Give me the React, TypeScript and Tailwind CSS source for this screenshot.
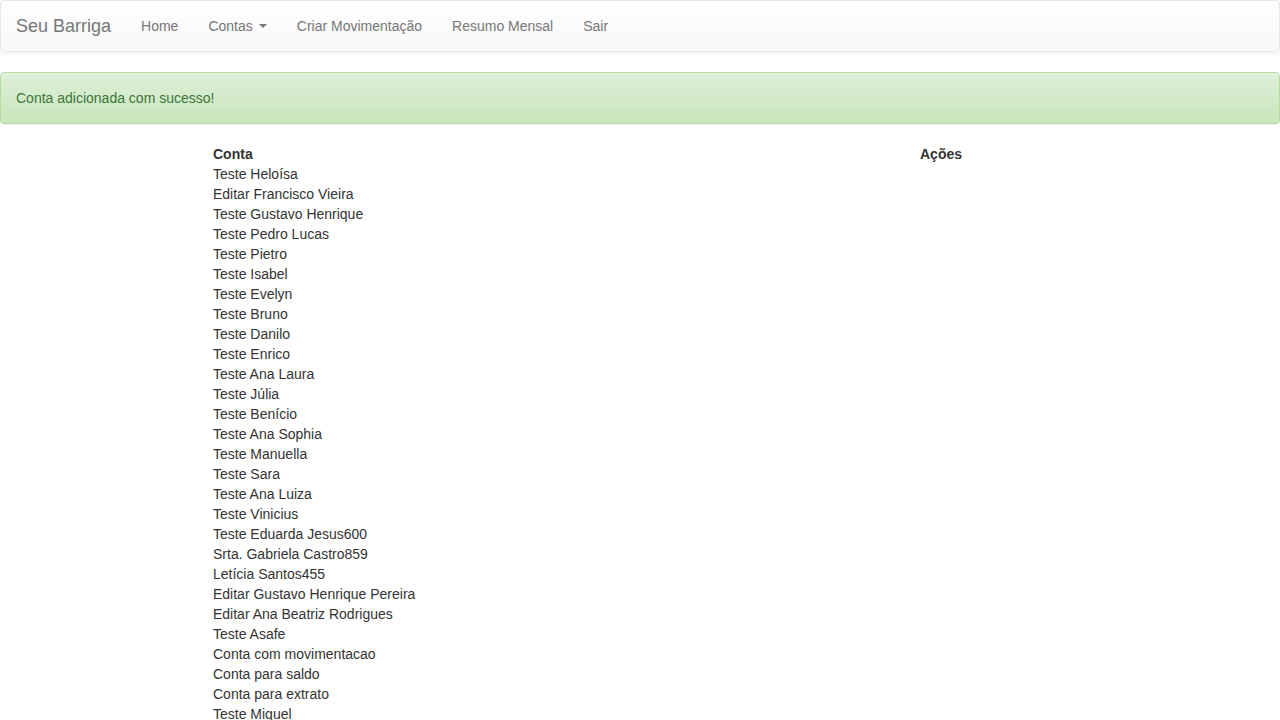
import React from "react";

const navLinks = ["Home", "Contas", "Criar Movimentação", "Resumo Mensal", "Sair"];

const contas: string[] = [
  "Teste Heloísa",
  "Editar Francisco Vieira",
  "Teste Gustavo Henrique",
  "Teste Pedro Lucas",
  "Teste Pietro",
  "Teste Isabel",
  "Teste Evelyn",
  "Teste Bruno",
  "Teste Danilo",
  "Teste Enrico",
  "Teste Ana Laura",
  "Teste Júlia",
  "Teste Benício",
  "Teste Ana Sophia",
  "Teste Manuella",
  "Teste Sara",
  "Teste Ana Luiza",
  "Teste Vinicius",
  "Teste Eduarda Jesus600",
  "Srta. Gabriela Castro859",
  "Letícia Santos455",
  "Editar Gustavo Henrique Pereira",
  "Editar Ana Beatriz Rodrigues",
  "Teste Asafe",
  "Conta com movimentacao",
  "Conta para saldo",
  "Conta para extrato",
  "Teste Miguel",
  "Teste Lorena",
  "Teste Rafael",
];

const App: React.FC = () => {
  return (
    <div className="min-h-screen bg-white text-[14px] leading-[20px] text-[#333]" style={{ fontFamily: '"Liberation Sans", Arial, sans-serif' }}>
      {/* Navbar */}
      <nav className="flex h-[52px] items-stretch rounded-[4px] border border-[#e7e7e7] bg-linear-to-b from-white to-[#f8f8f8] shadow-[inset_0_1px_0_rgba(255,255,255,0.15),0_1px_5px_rgba(0,0,0,0.075)]">
        <a className="flex items-center px-[15px] text-[18px] text-[#777]">Seu Barriga</a>
        <ul className="flex items-stretch">
          {navLinks.map((link) => (
            <li key={link} className="flex items-center px-[15px] text-[#777]">
              {link}
              {link === "Contas" && (
                <span className="ml-[6px] inline-block h-0 w-0 border-x-[4px] border-t-[4px] border-x-transparent border-t-[#777]" />
              )}
            </li>
          ))}
        </ul>
      </nav>

      {/* Alert */}
      <div className="mt-[20px] rounded-[4px] border border-[#b2dba1] bg-linear-to-b from-[#dff0d8] to-[#c8e5bc] p-[15px] text-[#3c763d] shadow-[inset_0_1px_0_rgba(255,255,255,0.25),0_1px_2px_rgba(0,0,0,0.05)]">
        Conta adicionada com sucesso!
      </div>

      {/* Table */}
      <table className="ml-[213px] mt-[20px] w-[854px] border-collapse">
        <thead>
          <tr>
            <th className="w-[707px] p-0 text-left font-bold">Conta</th>
            <th className="p-0 text-left font-bold">Ações</th>
          </tr>
        </thead>
        <tbody>
          {contas.map((c, i) => (
            <tr key={i}>
              <td className="p-0">{c}</td>
              <td className="p-0"></td>
            </tr>
          ))}
        </tbody>
      </table>
    </div>
  );
};

export default App;
